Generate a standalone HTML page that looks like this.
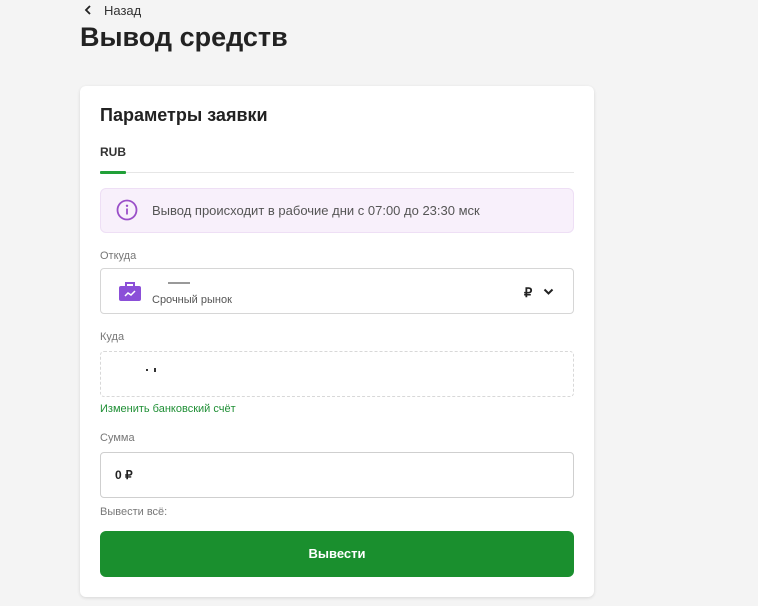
<!DOCTYPE html>
<html><head><meta charset="utf-8"><style>
*{margin:0;padding:0;box-sizing:border-box}
body{width:758px;height:606px;background:#f4f4f4;font-family:"Liberation Sans",sans-serif;position:relative;overflow:hidden;color:#222}
.a{position:absolute}
.lbl{font-size:11px;color:#777}
.box{position:absolute;left:100px;width:474px;border:1px solid #d6d6d6;border-radius:4px;background:#fff}
</style></head><body>
<svg class="a" style="left:84px;top:5px" width="8" height="10" viewBox="0 0 8 10"><path d="M6 1L2 5l4 4" stroke="#222" stroke-width="1.8" fill="none"/></svg>
<div class="a" style="left:104px;top:3px;font-size:13px;color:#333">Назад</div>
<div class="a" style="left:80px;top:22px;font-size:27px;font-weight:bold;color:#222">Вывод средств</div>
<div class="a" style="left:80px;top:86px;width:514px;height:511px;background:#fff;border-radius:6px;box-shadow:0 1px 3px rgba(0,0,0,.12)"></div>
<div class="a" style="left:100px;top:105px;font-size:18px;font-weight:bold;color:#222">Параметры заявки</div>
<div class="a" style="left:100px;top:145px;font-size:12px;font-weight:bold;color:#333">RUB</div>
<div class="a" style="left:100px;top:172px;width:474px;height:1px;background:#e6e6e6"></div>
<div class="a" style="left:100px;top:171px;width:26px;height:3px;background:#21a038;border-radius:1px"></div>
<div class="a" style="left:100px;top:188px;width:474px;height:45px;background:#f8f0fb;border:1px solid #eedff5;border-radius:6px"></div>
<svg class="a" style="left:116px;top:199px" width="22" height="22" viewBox="0 0 22 22"><circle cx="11" cy="11" r="9.5" stroke="#9a4fc8" stroke-width="1.8" fill="none"/><circle cx="11" cy="6.8" r="1.2" fill="#9a4fc8"/><path d="M11 9.5v6" stroke="#9a4fc8" stroke-width="1.8"/></svg>
<div class="a" style="left:152px;top:203px;font-size:13px;color:#555">Вывод происходит в рабочие дни с 07:00 до 23:30 мск</div>
<div class="a lbl" style="left:100px;top:250px">Откуда</div>
<div class="box" style="top:268px;height:46px"></div>
<svg class="a" style="left:119px;top:280px" width="22" height="21" viewBox="0 0 22 21"><path d="M7 6V3h8v3" stroke="#8b4fd8" stroke-width="2" fill="none"/><rect x="0" y="6" width="22" height="15" rx="2" fill="#8b4fd8"/><path d="M6 16l3-3 3 2 4-4" stroke="#fff" stroke-width="1.5" fill="none"/></svg>
<div class="a" style="left:168px;top:282px;width:22px;height:2px;background:#555;opacity:.6"></div>
<div class="a" style="left:152px;top:294px;font-size:11px;color:#555">Срочный рынок</div>
<div class="a" style="left:524px;top:285px;font-size:13px;font-weight:bold;color:#222">₽</div>
<svg class="a" style="left:543px;top:288px" width="11" height="8" viewBox="0 0 11 8"><path d="M1.5 1.5l4 4 4-4" stroke="#222" stroke-width="2" fill="none"/></svg>
<div class="a lbl" style="left:100px;top:331px">Куда</div>
<div class="a" style="left:100px;top:351px;width:474px;height:46px;border:1px dashed #d8d8d8;border-radius:4px"></div>
<div class="a" style="left:146px;top:369px;width:2px;height:2px;background:#333"></div>
<div class="a" style="left:154px;top:368px;width:2px;height:4px;background:#333"></div>
<div class="a" style="left:100px;top:403px;font-size:11px;color:#1f8f35">Изменить банковский счёт</div>
<div class="a lbl" style="left:100px;top:432px">Сумма</div>
<div class="box" style="top:452px;height:46px;border-color:#cfcfcf"></div>
<div class="a" style="left:115px;top:468px;font-size:12px;font-weight:bold;color:#222">0 ₽</div>
<div class="a lbl" style="left:100px;top:506px">Вывести всё:</div>
<div class="a" style="left:100px;top:531px;width:474px;height:46px;background:#1a8f2e;border-radius:6px;color:#fff;font-size:13px;font-weight:bold;text-align:center;line-height:46px">Вывести</div>
</body></html>
